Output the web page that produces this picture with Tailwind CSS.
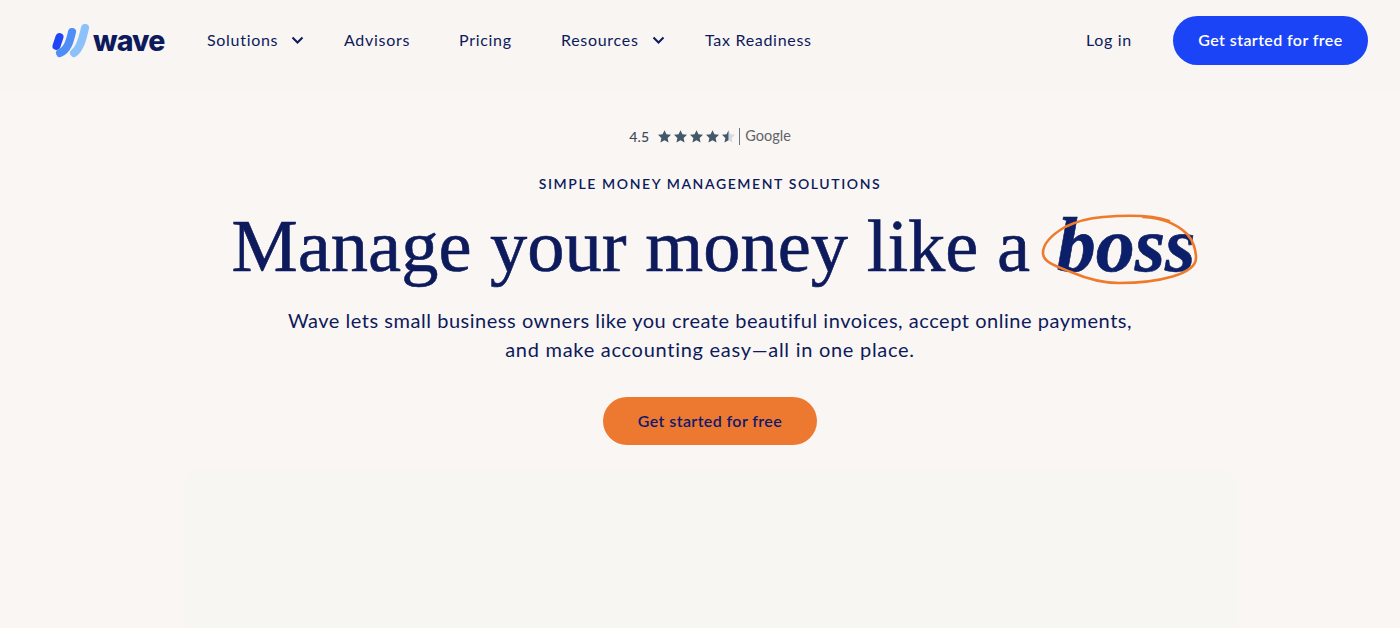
<!DOCTYPE html>
<html lang="en">
<head>
  <meta charset="UTF-8" />
  <meta name="viewport" content="width=device-width, initial-scale=1.0" />
  <title>Wave</title>
  <script src="https://cdn.jsdelivr.net/npm/@tailwindcss/browser@4"></script>
</head>
<body class="bg-[#faf6f3] h-[628px] overflow-hidden font-['Lato','Open_Sans',sans-serif] text-[#0d1a5c]">
  <!-- nav -->
  <header class="h-[92px] bg-[#f9f5f2] flex items-center pl-[51px] pr-[32px] pb-[12px]">
    <a class="flex items-center w-[156px]">
      <svg width="116" height="36" viewBox="0 0 116 36">
        <path d="M8.5 15 L5.5 24" stroke="#1f45f5" stroke-width="8" stroke-linecap="round" fill="none" />
        <path d="M21 10 C19 18 17 28 9 31" stroke="#4f8df7" stroke-width="8" stroke-linecap="round" fill="none" />
        <path d="M34 6 C32 14 30 26 23 31" stroke="#8cc1fb" stroke-width="8" stroke-linecap="round" fill="none" />
        <text x="42" y="29" font-family="Inter, sans-serif" font-size="28.5" font-weight="800" letter-spacing="-0.8" fill="#0d1a5c">wave</text>
      </svg>
    </a>
    <nav class="flex items-center text-[16px] tracking-[0.7px]">
      <a class="flex items-center w-[137px]">Solutions
        <svg class="ml-[13px]" width="13" height="9" viewBox="0 0 13 9"><path d="M1.5 1.5 L6.5 6.5 L11.5 1.5" stroke="#0d1a5c" stroke-width="2" fill="none" /></svg>
      </a>
      <a class="w-[115px]">Advisors</a>
      <a class="w-[102px]">Pricing</a>
      <a class="flex items-center w-[144px]">Resources
        <svg class="ml-[13px]" width="13" height="9" viewBox="0 0 13 9"><path d="M1.5 1.5 L6.5 6.5 L11.5 1.5" stroke="#0d1a5c" stroke-width="2" fill="none" /></svg>
      </a>
      <a>Tax Readiness</a>
    </nav>
    <div class="ml-auto flex items-center gap-[41px] text-[16px] tracking-[0.7px]">
      <a>Log in</a>
      <a class="h-[49px] w-[195px] rounded-full bg-[#1a44f5] text-white font-semibold tracking-[0.4px] flex items-center justify-center">Get started for free</a>
    </div>
  </header>

  <!-- hero -->
  <main class="flex flex-col items-center pl-[20px]">
    <div class="mt-[34px] h-[20px] flex items-center text-[14px] text-[#3d4a5a] tracking-[0.2px]">
      <span class="font-medium pt-[1px]">4.5</span>
      <span class="ml-[8px] flex gap-[1px]">
        <svg width="15" height="15" viewBox="0 0 20 20" fill="#45586b"><path d="M10 1.5l2.6 5.6 6.1.7-4.5 4.2 1.2 6L10 15l-5.4 3 1.2-6L1.3 7.8l6.1-.7z" /></svg>
        <svg width="15" height="15" viewBox="0 0 20 20" fill="#45586b"><path d="M10 1.5l2.6 5.6 6.1.7-4.5 4.2 1.2 6L10 15l-5.4 3 1.2-6L1.3 7.8l6.1-.7z" /></svg>
        <svg width="15" height="15" viewBox="0 0 20 20" fill="#45586b"><path d="M10 1.5l2.6 5.6 6.1.7-4.5 4.2 1.2 6L10 15l-5.4 3 1.2-6L1.3 7.8l6.1-.7z" /></svg>
        <svg width="15" height="15" viewBox="0 0 20 20" fill="#45586b"><path d="M10 1.5l2.6 5.6 6.1.7-4.5 4.2 1.2 6L10 15l-5.4 3 1.2-6L1.3 7.8l6.1-.7z" /></svg>
        <svg width="15" height="15" viewBox="0 0 20 20"><path fill="#d5d9dd" d="M10 1.5l2.6 5.6 6.1.7-4.5 4.2 1.2 6L10 15z" /><path fill="#45586b" d="M10 1.5v13.5l-5.4 3 1.2-6L1.3 7.8l6.1-.7z" /></svg>
      </span>
      <span class="ml-[3px] h-[17px] w-px bg-[#6b7580]"></span>
      <span class="ml-[5px] text-[14.5px] tracking-normal text-[#5f6368]">Google</span>
    </div>
    <p class="mt-[27px] text-[14px] font-semibold tracking-[1.6px]">SIMPLE MONEY MANAGEMENT SOLUTIONS</p>
    <h1 class="mt-[8px] ml-[7px] font-['Liberation_Serif',serif] text-[74.5px] leading-[86px] whitespace-nowrap [-webkit-text-stroke:0.6px_#0d1a5c]">Manage your money like a <em class="relative ml-[8px] text-[78px] font-bold text-[#0b1f6a]">boss
      <svg class="absolute left-[-16px] top-[11px]" width="160" height="76" viewBox="0 0 160 76" fill="none">
        <path d="M102 5 C122 6 136 12 146 22 C152 28 155 38 155 46 C155 62 118 71 78 71 C60 71 44 66 30 60 C14 54 2 50 2 41 C2 30 12 22 24 15 C38 8 50 6 62 5 C86 3 112 3 128 9" stroke="#ee7a2b" stroke-width="2.6" stroke-linecap="round" />
      </svg>
    </em></h1>
    <p class="mt-[17px] text-center text-[20px] leading-[29px] tracking-[0.53px]">Wave lets small business owners like you create beautiful invoices, accept online payments,<br /><span class="tracking-[0.72px]">and make accounting easy—all in one place.</span></p>
    <a class="mt-[33px] h-[48px] w-[214px] rounded-full bg-[#ed7830] font-semibold text-[16px] tracking-[0.4px] text-[#0d1a6e] flex items-center justify-center">Get started for free</a>
    <div class="mt-[25px] w-[1054px] h-[158px] rounded-t-[16px] bg-[#f8f6f2]"></div>
  </main>
</body>
</html>
